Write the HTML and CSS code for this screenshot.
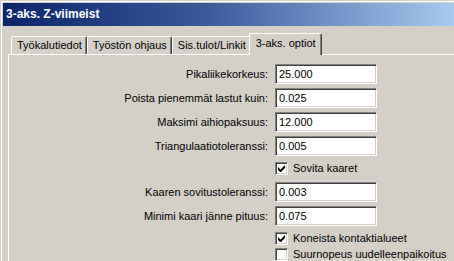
FILE: index.html
```html
<!DOCTYPE html>
<html>
<head>
    <meta name="viewport" content="width=device-width, initial-scale=1">
    <title>3-aks. Z-viimeist</title>
    <link rel="stylesheet" href="styles.css">
</head>
<body>
    <div class="window">
        <div class="titlebar">3-aks. Z-viimeist</div>

        <div class="content">
            <div class="tabs">
                <div class="tab">Työkalutiedot</div>
                <div class="tab">Työstön ohjaus</div>
                <div class="tab">Sis.tulot/Linkit</div>
                <div class="tab active">3-aks. optiot</div>
            </div>

            <div class="panel">
                <div class="row">
                    <span class="label">Pikaliikekorkeus:</span>
                    <div class="field">25.000</div>
                </div>
                <div class="row">
                    <span class="label">Poista pienemmät lastut kuin:</span>
                    <div class="field">0.025</div>
                </div>
                <div class="row">
                    <span class="label">Maksimi aihiopaksuus:</span>
                    <div class="field">12.000</div>
                </div>
                <div class="row">
                    <span class="label">Triangulaatiotoleranssi:</span>
                    <div class="field">0.005</div>
                </div>
                <div class="check-row">
                    <span class="box">
                        <svg width="7" height="7" viewBox="0 0 7 7"><path d="M0 2v3l2 2h1l4-4V0L2.5 4.5z" fill="#000"/></svg>
                    </span>
                    Sovita kaaret
                </div>
                <div class="row">
                    <span class="label">Kaaren sovitustoleranssi:</span>
                    <div class="field">0.003</div>
                </div>
                <div class="row">
                    <span class="label">Minimi kaari jänne pituus:</span>
                    <div class="field">0.075</div>
                </div>
                <div class="check-row tight">
                    <span class="box">
                        <svg width="7" height="7" viewBox="0 0 7 7"><path d="M0 2v3l2 2h1l4-4V0L2.5 4.5z" fill="#000"/></svg>
                    </span>
                    Koneista kontaktialueet
                </div>
                <div class="check-row">
                    <span class="box"></span>
                    Suurnopeus uudelleenpaikoitus
                </div>
            </div>
        </div>
    </div>
</body>
</html>
```

FILE: styles.css
```css
html, body {
    height: 261px;
    overflow: hidden;
}
body {
    margin: 0;
    background-color: #d4d0c8;
    font-family: "Liberation Sans", Arial, sans-serif;
    font-size: 11px;
    color: #000;
}
.window {
    border-top: 1px solid #d4d0c8;
    border-left: 1px solid #d4d0c8;
    box-shadow: inset 1px 1px #fff;
    padding: 2px 0 0 2px;
}
.titlebar {
    height: 23px;
    line-height: 23px;
    padding-left: 3px;
    background: linear-gradient(to right, #0a246a, #3a5a9a 45%, #a6caf0);
    color: #fff;
    font-weight: bold;
    font-size: 12px;
}
.content {
    padding: 7px 0 0 5px;
}
.tabs {
    display: flex;
    align-items: flex-end;
    height: 21px;
    padding-left: 3px;
    position: relative;
    z-index: 1;
}
.tab {
    height: 17px;
    line-height: 17px;
    padding: 0 4px 0 5px;
    border-left: 1px solid #fff;
    border-top: 1px solid #fff;
    border-right: 1px solid #404040;
    box-shadow: inset -1px 0 #808080;
    border-top-left-radius: 2px;
    border-top-right-radius: 2px;
    white-space: nowrap;
}
.tab.active {
    height: 20px;
    line-height: 19px;
    margin: 0 0 -1px -2px;
    padding: 0 5px 1px 6px;
    background-color: #d4d0c8;
}
.panel {
    border-top: 1px solid #fff;
    border-left: 1px solid #fff;
    padding: 9px 0 0 1px;
}
.row {
    display: grid;
    grid-template-columns: 258px 102px;
    column-gap: 7px;
    align-items: center;
    margin-bottom: 4px;
}
.label {
    text-align: right;
    white-space: nowrap;
}
.field {
    height: 18px;
    line-height: 18px;
    padding: 0 3px;
    background-color: #fff;
    border-top: 1px solid #808080;
    border-left: 1px solid #808080;
    border-bottom: 1px solid #fff;
    border-right: 1px solid #fff;
    box-shadow: inset 1px 1px #404040, inset -1px -1px #d4d0c8;
}
.check-row {
    display: flex;
    align-items: center;
    height: 16px;
    margin-left: 265px;
    margin-bottom: 6px;
    white-space: nowrap;
}
.check-row.tight {
    margin-bottom: 0;
}
.box {
    width: 9px;
    height: 9px;
    margin-right: 5px;
    display: flex;
    align-items: center;
    justify-content: center;
    background-color: #fff;
    border-top: 1px solid #808080;
    border-left: 1px solid #808080;
    border-bottom: 1px solid #fff;
    border-right: 1px solid #fff;
    box-shadow: inset 1px 1px #404040, inset -1px -1px #d4d0c8;
    padding: 1px;
}
```
